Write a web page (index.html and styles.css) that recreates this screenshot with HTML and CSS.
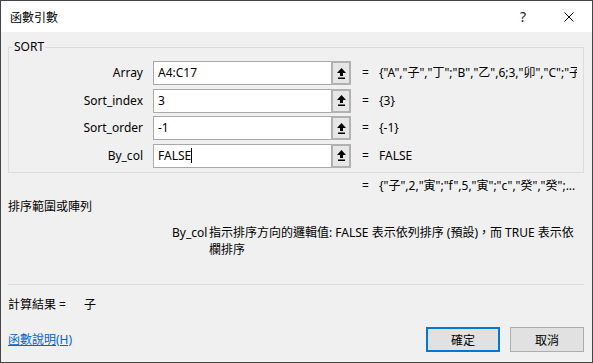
FILE: index.html
```html
<!DOCTYPE html>
<html lang="zh-Hant">
<head>
    <meta charset="UTF-8">
    <meta name="viewport" content="width=device-width, initial-scale=1.0">
    <title>函數引數</title>
    <link rel="stylesheet" href="styles.css">
</head>
<body>
    <div class="dialog">
        <div class="titlebar">
            <span class="title">函數引數</span>
            <div class="caption-buttons">
                <span class="cap-btn">?</span>
                <span class="cap-btn">
                    <svg width="10" height="10" viewBox="0 0 10 10"><path d="M0.5 0.5 L9.5 9.5 M9.5 0.5 L0.5 9.5" stroke="#000" stroke-width="1" fill="none"/></svg>
                </span>
            </div>
        </div>

        <div class="content">
            <fieldset class="func-group">
                <legend>SORT</legend>

                <div class="arg-row">
                    <span class="arg-label">Array</span>
                    <div class="ref-input">A4:C17</div>
                    <span class="ref-btn">
                        <svg width="9" height="11" viewBox="0 0 9 11"><path d="M4.5 0 L9 5 L6 5 L6 8 L3 8 L3 5 L0 5 Z M1 9.5 L8 9.5 L8 11 L1 11 Z" fill="#000"/></svg>
                    </span>
                    <span class="eq">=</span>
                    <span class="arg-value">{"A","子","丁";"B","乙",6;3,"卯","C";"子",2,"寅";"f",5,"寅"}</span>
                </div>

                <div class="arg-row">
                    <span class="arg-label">Sort_index</span>
                    <div class="ref-input">3</div>
                    <span class="ref-btn">
                        <svg width="9" height="11" viewBox="0 0 9 11"><path d="M4.5 0 L9 5 L6 5 L6 8 L3 8 L3 5 L0 5 Z M1 9.5 L8 9.5 L8 11 L1 11 Z" fill="#000"/></svg>
                    </span>
                    <span class="eq">=</span>
                    <span class="arg-value">{3}</span>
                </div>

                <div class="arg-row">
                    <span class="arg-label">Sort_order</span>
                    <div class="ref-input">-1</div>
                    <span class="ref-btn">
                        <svg width="9" height="11" viewBox="0 0 9 11"><path d="M4.5 0 L9 5 L6 5 L6 8 L3 8 L3 5 L0 5 Z M1 9.5 L8 9.5 L8 11 L1 11 Z" fill="#000"/></svg>
                    </span>
                    <span class="eq">=</span>
                    <span class="arg-value">{-1}</span>
                </div>

                <div class="arg-row">
                    <span class="arg-label">By_col</span>
                    <div class="ref-input">FALSE<span class="caret"></span></div>
                    <span class="ref-btn">
                        <svg width="9" height="11" viewBox="0 0 9 11"><path d="M4.5 0 L9 5 L6 5 L6 8 L3 8 L3 5 L0 5 Z M1 9.5 L8 9.5 L8 11 L1 11 Z" fill="#000"/></svg>
                    </span>
                    <span class="eq">=</span>
                    <span class="arg-value">FALSE</span>
                </div>
            </fieldset>

            <div class="result-row">
                <span class="eq">=</span>
                <span class="arg-value">{"子",2,"寅";"f",5,"寅";"c","癸","癸";...</span>
            </div>

            <p class="func-desc">排序範圍或陣列</p>

            <div class="arg-desc">
                <span class="arg-name">By_col</span>
                <span class="arg-text">指示排序方向的邏輯值: FALSE 表示依列排序 (預設)，而 TRUE 表示依<br>欄排序</span>
            </div>

            <div class="footer">
                <p class="formula-result">計算結果 =<span class="result-value">子</span></p>
                <div class="bottom-row">
                    <a href="#" class="help-link">函數說明(H)</a>
                    <div class="buttons">
                        <button class="btn btn-default">確定</button>
                        <button class="btn">取消</button>
                    </div>
                </div>
            </div>
        </div>
    </div>
</body>
</html>
```

FILE: styles.css
```css
/* General Reset */
* {
    margin: 0;
    padding: 0;
    box-sizing: border-box;
}

body {
    font-family: 'Noto Sans', 'Noto Sans CJK TC', sans-serif;
    font-size: 12px;
    line-height: 16px;
    color: #000;
    background-color: #fff;
}

.dialog {
    width: 593px;
    height: 363px;
    border: 1px solid #454545;
    display: flex;
    flex-direction: column;
    background-color: #f0f0f0;
}

.titlebar {
    height: 31px;
    background-color: #fff;
    display: flex;
    justify-content: space-between;
    align-items: center;
    padding-left: 9px;
}

.titlebar .title {
    font-family: 'Noto Sans CJK TC', sans-serif;
    font-size: 12px;
}

.caption-buttons {
    display: flex;
    height: 100%;
}

.cap-btn {
    width: 46px;
    display: flex;
    align-items: center;
    justify-content: center;
    font-size: 14px;
    color: #222;
}

.content {
    flex: 1;
    display: flex;
    flex-direction: column;
    padding: 0 8px 10px 7px;
}

.func-group {
    margin-top: 7px;
    border: 1px solid #dcdcdc;
    padding: 6px 6px 4px 0;
    min-inline-size: auto;
}

.func-group legend {
    margin-left: 4px;
    padding: 0 1px;
    line-height: 16px;
}

.arg-row {
    display: grid;
    grid-template-columns: 144px 178px 20px 28px 1fr;
    align-items: center;
    height: 24px;
    margin-bottom: 3.5px;
}

.arg-row:last-child {
    margin-bottom: 0;
}

.arg-label {
    text-align: right;
    padding-right: 10px;
}

.ref-input {
    height: 24px;
    background-color: #fff;
    border: 1px solid #a9a9a9;
    border-right: none;
    padding: 3px 4px;
    white-space: nowrap;
    display: flex;
    align-items: center;
}

.caret {
    display: inline-block;
    width: 1px;
    height: 15px;
    background-color: #000;
}

.ref-btn {
    height: 24px;
    background-color: #e6e6e6;
    border: 2px solid #b1b1b1;
    display: flex;
    align-items: center;
    justify-content: center;
}

.eq {
    padding-left: 11px;
}

.arg-value {
    white-space: nowrap;
    overflow: hidden;
}

.result-row {
    display: grid;
    grid-template-columns: 28px 1fr;
    margin: 5px 0 0 343px;
}

.func-desc {
    margin-top: 4px;
    font-family: 'Noto Sans CJK TC', sans-serif;
}

.arg-desc {
    display: flex;
    margin: 10px 0 0 164px;
    line-height: 17px;
}

.arg-name {
    flex-shrink: 0;
    width: 37px;
}

.arg-text {
    white-space: nowrap;
}

.footer {
    margin-top: auto;
    border-top: 1px solid #dcdcdc;
}

.formula-result {
    margin-top: 12px;
}

.result-value {
    margin-left: 18px;
}

.bottom-row {
    display: flex;
    justify-content: space-between;
    align-items: center;
    margin-top: 14px;
}

.help-link {
    color: #0066cc;
    text-decoration: underline;
}

.buttons {
    display: flex;
    gap: 10px;
}

.btn {
    width: 74px;
    height: 25px;
    font-family: 'Noto Sans CJK TC', sans-serif;
    font-size: 12px;
    background-color: #e1e1e1;
    border: 1px solid #adadad;
    color: #000;
}

.btn-default {
    border: 2px solid #0078d7;
}
```
